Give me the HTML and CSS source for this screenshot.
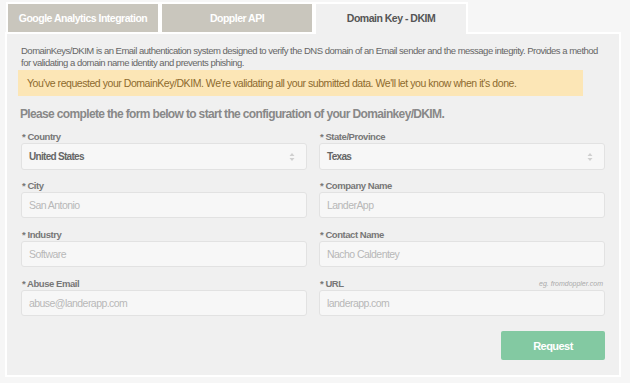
FILE: index.html
```html
<!DOCTYPE html>
<html lang="en">
<head>
    <meta charset="UTF-8">
    <title>Domain Key - DKIM</title>
    <link rel="stylesheet" href="styles.css">
</head>
<body>
    <div class="page">
        <div class="tabs">
            <div class="tab">Google Analytics Integration</div>
            <div class="tab">Doppler API</div>
            <div class="tab active">Domain Key - DKIM</div>
        </div>
        <div class="panel">
            <p class="intro">DomainKeys/DKIM is an Email authentication system designed to verify the DNS domain of an Email sender and the message integrity. Provides a method for validating a domain name identity and prevents phishing.</p>
            <div class="alert">You've requested your DomainKey/DKIM. We're validating all your submitted data. We'll let you know when it's done.</div>
            <h2>Please complete the form below to start the configuration of your Domainkey/DKIM.</h2>
            <form class="dkim-form" autocomplete="off">
                <div class="form-group">
                    <label>* Country</label>
                    <div class="field select">United States
                        <svg class="arrows" width="6" height="10" viewBox="0 0 6 10"><path d="M0.5 4 L3 1 L5.5 4 Z M0.5 6 L3 9 L5.5 6 Z" fill="#d0d0d0"/></svg>
                    </div>
                </div>
                <div class="form-group">
                    <label>* State/Province</label>
                    <div class="field select">Texas
                        <svg class="arrows" width="6" height="10" viewBox="0 0 6 10"><path d="M0.5 4 L3 1 L5.5 4 Z M0.5 6 L3 9 L5.5 6 Z" fill="#d0d0d0"/></svg>
                    </div>
                </div>
                <div class="form-group">
                    <label>* City</label>
                    <div class="field">San Antonio</div>
                </div>
                <div class="form-group">
                    <label>* Company Name</label>
                    <div class="field">LanderApp</div>
                </div>
                <div class="form-group">
                    <label>* Industry</label>
                    <div class="field">Software</div>
                </div>
                <div class="form-group">
                    <label>* Contact Name</label>
                    <div class="field">Nacho Caldentey</div>
                </div>
                <div class="form-group">
                    <label>* Abuse Email</label>
                    <div class="field">abuse@landerapp.com</div>
                </div>
                <div class="form-group">
                    <label>* URL <span class="hint">eg. fromdoppler.com</span></label>
                    <div class="field">landerapp.com</div>
                </div>
            </form>
            <div class="actions">
                <button type="button">Request</button>
            </div>
        </div>
    </div>
</body>
</html>
```

FILE: styles.css
```css
body {
    margin: 0;
    background-color: #f6f6f6;
    font-family: "Liberation Sans", Arial, sans-serif;
    color: #666;
}

.page {
    padding: 0 9px 6px 5px;
}

.tabs {
    display: flex;
    padding: 2px 0 0 1px;
}

.tab {
    width: 150px;
    height: 28px;
    line-height: 28px;
    border: 2px solid #fff;
    border-bottom: 0;
    background-color: #c9c6bd;
    color: #fff;
    font-size: 10.5px;
    letter-spacing: -0.5px;
    font-weight: bold;
    text-align: center;
    white-space: nowrap;
}

.tab.active {
    height: 30px;
    margin-bottom: -2px;
    background-color: #f0f0f0;
    color: #555;
    position: relative;
}

.panel {
    border: 2px solid #fff;
    background-color: #f0f0f0;
    padding: 11px 14px 15px 14px;
}

.intro {
    margin: 0;
    font-size: 9.5px;
    letter-spacing: -0.5px;
    line-height: 12px;
    color: #666;
}

.alert {
    margin: 1px 22px 0 -3px;
    height: 26px;
    line-height: 26px;
    padding-left: 9px;
    background-color: #fce6b6;
    color: #8d6a2e;
    font-size: 10.5px;
    letter-spacing: -0.45px;
    white-space: nowrap;
}

h2 {
    margin: 11px 0 8px -1px;
    font-size: 12px;
    letter-spacing: -0.65px;
    line-height: 14px;
    color: #888;
}

.dkim-form {
    display: grid;
    grid-template-columns: 1fr 1fr;
    column-gap: 12px;
    row-gap: 9px;
}

label {
    display: flex;
    justify-content: space-between;
    align-items: center;
    height: 14px;
    padding-left: 1px;
    font-size: 9.5px;
    letter-spacing: -0.45px;
    font-weight: bold;
    color: #777;
}

.hint {
    font-size: 7px;
    letter-spacing: 0;
    font-weight: normal;
    font-style: italic;
    color: #aaa;
    padding-right: 2px;
}

.field {
    position: relative;
    height: 26px;
    box-sizing: border-box;
    line-height: 24px;
    padding-left: 7px;
    background-color: #f7f7f7;
    border: 1px solid #e2e2e2;
    border-radius: 3px;
    font-size: 10.5px;
    letter-spacing: -0.55px;
    color: #b8b8b8;
}

.field.select {
    height: 27px;
    line-height: 25px;
    font-size: 10px;
    letter-spacing: -0.7px;
    font-weight: bold;
    color: #666;
    margin-bottom: -1px;
}

.arrows {
    position: absolute;
    right: 11px;
    top: 8px;
}

.actions {
    display: flex;
    justify-content: flex-end;
    margin-top: 15px;
}

button {
    width: 104px;
    height: 29px;
    border: none;
    border-radius: 2px;
    background-color: #83c9a2;
    color: #fff;
    font-family: inherit;
    font-size: 11px;
    letter-spacing: -0.55px;
    font-weight: bold;
}
```
